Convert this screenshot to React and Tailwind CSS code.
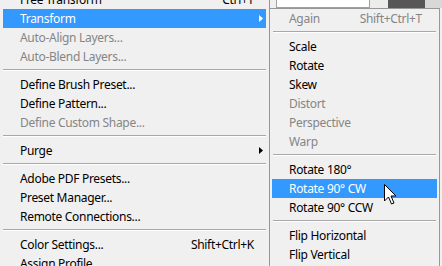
import React from "react";

const FONT = { fontFamily: '"Noto Sans", "Segoe UI", sans-serif' };

function Arrow({ white }) {
  return (
    <svg width="4" height="7" viewBox="0 0 4 7" className="absolute right-[3px] top-[6px]">
      <path d="M0 0 L4 3.5 L0 7 Z" fill={white ? "#ffffff" : "#000000"} />
    </svg>
  );
}

function MainRow({ label, shortcut, disabled, active, sub }) {
  return (
    <div
      className={
        "relative shrink-0 mx-[3px] h-[19px] flex items-center pl-[17px] pr-[12px] text-[12px] tracking-[-0.3px] " +
        (active ? "bg-[#3399ff] text-white" : disabled ? "text-[#858585]" : "text-black")
      }
    >
      <span className="flex-1 whitespace-nowrap">{label}</span>
      {shortcut && <span className="whitespace-nowrap">{shortcut}</span>}
      {sub && <Arrow white={active} />}
    </div>
  );
}

function SubRow({ label, shortcut, disabled, active }) {
  return (
    <div
      className={
        "shrink-0 mx-[2px] h-[19px] flex items-center pl-[17px] pr-[15px] text-[12px] tracking-[-0.3px] " +
        (active ? "bg-[#3399ff] text-white" : disabled ? "text-[#858585]" : "text-black")
      }
    >
      <span className="flex-1 whitespace-nowrap">{label}</span>
      {shortcut && <span className="whitespace-nowrap">{shortcut}</span>}
    </div>
  );
}

function Sep() {
  return (
    <div className="shrink-0 h-[9px] pt-[3px] mx-[3px]">
      <div className="h-[1px] bg-[#a8a8a8]" />
      <div className="h-[1px] bg-white" />
    </div>
  );
}

export default function App() {
  return (
    <div
      className="relative w-[442px] h-[266px] overflow-hidden bg-[#f0f0f0] flex items-start"
      style={FONT}
    >
      <div className="w-[269px] shrink-0 flex flex-col mt-[-10px]">
        <MainRow label="Free Transform" shortcut="Ctrl+T" />
        <MainRow label="Transform" active sub />
        <MainRow label="Auto-Align Layers..." disabled />
        <MainRow label="Auto-Blend Layers..." disabled />
        <Sep />
        <MainRow label="Define Brush Preset..." />
        <MainRow label="Define Pattern..." />
        <MainRow label="Define Custom Shape..." disabled />
        <Sep />
        <MainRow label="Purge" sub />
        <Sep />
        <MainRow label="Adobe PDF Presets..." />
        <MainRow label="Preset Manager..." />
        <MainRow label="Remote Connections..." />
        <Sep />
        <MainRow label="Color Settings..." shortcut="Shift+Ctrl+K" />
        <MainRow label="Assign Profile..." />
      </div>
      <div className="w-[173px] h-[266px] shrink-0 flex flex-col border-l border-[#979797]">
        <div className="shrink-0 h-[8px] flex items-stretch">
          <div className="w-[6px] bg-[#f0f0f0]" />
          <div className="w-[94px] bg-white border-x border-b border-[#a0a0a0]" />
          <div className="w-[18px] bg-[#ececec]" />
          <div className="w-[37px] bg-[#575757]" />
          <div className="flex-1 bg-[#d8d8d8]" />
        </div>
        <div className="w-[170px] flex-1 flex flex-col bg-[#f0f0f0] border-t border-r border-[#979797]">
          <SubRow label="Again" shortcut="Shift+Ctrl+T" disabled />
          <Sep />
          <SubRow label="Scale" />
          <SubRow label="Rotate" />
          <SubRow label="Skew" />
          <SubRow label="Distort" disabled />
          <SubRow label="Perspective" disabled />
          <SubRow label="Warp" disabled />
          <Sep />
          <SubRow label="Rotate 180°" />
          <SubRow label="Rotate 90° CW" active />
          <SubRow label="Rotate 90° CCW" />
          <Sep />
          <SubRow label="Flip Horizontal" />
          <SubRow label="Flip Vertical" />
        </div>
      </div>
      <svg
        className="absolute left-[384px] top-[184px]"
        width="13"
        height="22"
        viewBox="0 0 13 22"
      >
        <path
          d="M0.5 0.5 L0.5 17 L4.5 13 L7.5 20 L10 19 L7 12 L12 12 Z"
          fill="#ffffff"
          stroke="#000000"
          strokeWidth="1"
          strokeLinejoin="miter"
        />
      </svg>
    </div>
  );
}
